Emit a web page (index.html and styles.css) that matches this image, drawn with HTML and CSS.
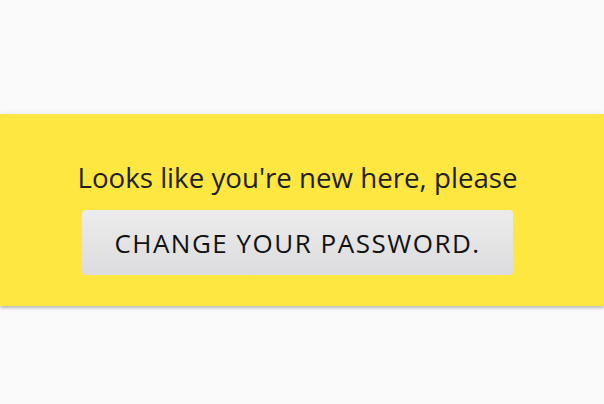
FILE: index.html
```html
<!DOCTYPE html>
<html>
<head>
<meta charset="utf-8">
<link rel="stylesheet" href="styles.css">
</head>
<body>
<div class="page">
  <section class="banner">
    <p class="message">Looks like you're new here, please</p>
    <button class="change-btn" type="button">CHANGE YOUR PASSWORD.</button>
  </section>
</div>
</body>
</html>
```
FILE: styles.css
```css
html, body {
  margin: 0;
  padding: 0;
}
body {
  background: #fafafa;
  font-family: "Open Sans", "DejaVu Sans", sans-serif;
  width: 604px;
  height: 404px;
  overflow: hidden;
}
.page {
  padding-top: 114px;
}
.banner {
  background: #fee740;
  height: 192px;
  box-sizing: border-box;
  padding: 45px 9px 0 0;
  display: flex;
  flex-direction: column;
  align-items: center;
  box-shadow: 0 2px 3px rgba(0,0,0,0.25), 0 -1px 6px rgba(0,0,0,0.06);
}
.message {
  margin: 0;
  font-size: 27.7px;
  line-height: 36px;
  color: #1e1e1e;
}
.change-btn {
  margin-top: 15px;
  width: 431px;
  height: 65px;
  border: none;
  border-radius: 4px;
  background: linear-gradient(#ececec, #dcdcde);
  font-family: inherit;
  font-size: 26px;
  letter-spacing: 1.5px;
  color: #111;
  padding: 0;
}
```
